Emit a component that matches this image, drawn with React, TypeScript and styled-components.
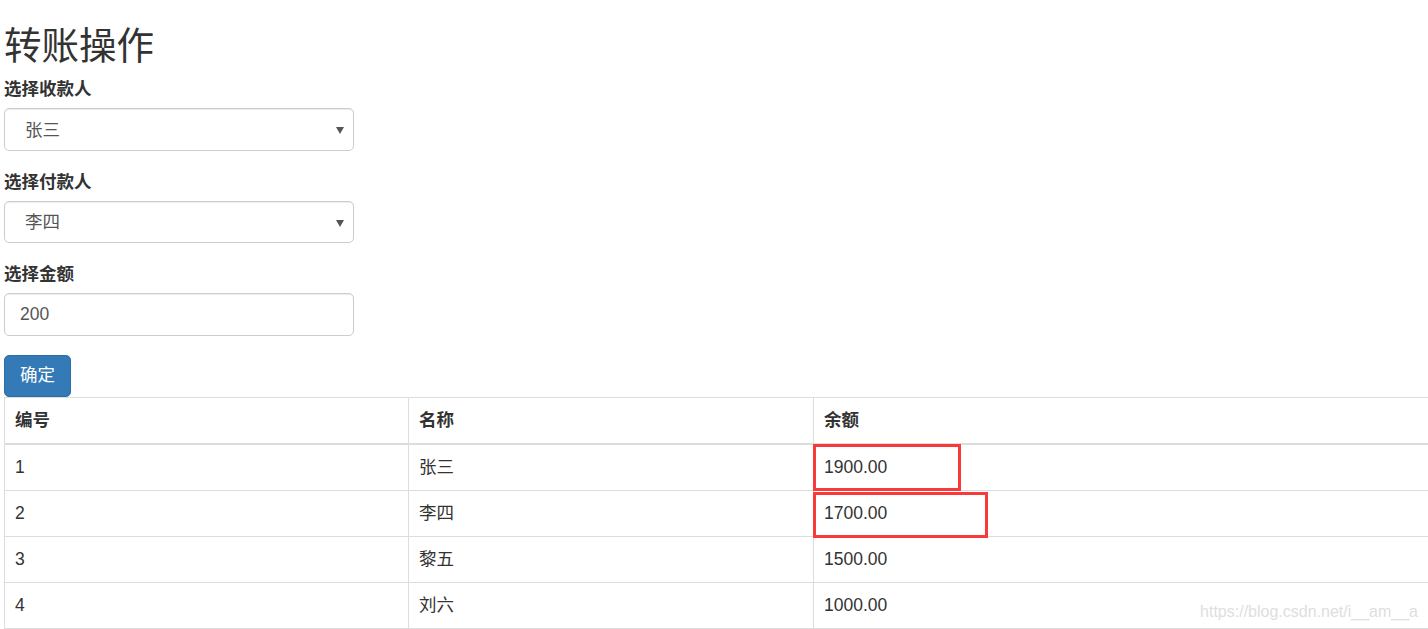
import styled, { createGlobalStyle } from "styled-components";

const GlobalStyle = createGlobalStyle`
  html, body {
    margin: 0;
    padding: 0;
    overflow: hidden;
    background: #fff;
  }
  body {
    font-family: "Liberation Sans", "Noto Sans CJK SC", sans-serif;
    font-size: 17.5px;
    line-height: 25px;
    color: #333;
  }
`;

interface Account {
  id: number;
  name: string;
  balance: string;
}

const accounts: Account[] = [
  { id: 1, name: "张三", balance: "1900.00" },
  { id: 2, name: "李四", balance: "1700.00" },
  { id: 3, name: "黎五", balance: "1500.00" },
  { id: 4, name: "刘六", balance: "1000.00" },
];

const App = () => {
  return (
    <Page>
      <GlobalStyle />
      <Title>转账操作</Title>
      <FormGroup>
        <Label>选择收款人</Label>
        <SelectBox>
          <Select defaultValue="张三">
            {accounts.map((a) => (
              <option key={a.id}>{a.name}</option>
            ))}
          </Select>
          <Caret width="8" height="8" viewBox="0 0 8 8">
            <path d="M0 1 L8 1 L4 8 Z" fill="#555" />
          </Caret>
        </SelectBox>
      </FormGroup>
      <FormGroup>
        <Label>选择付款人</Label>
        <SelectBox>
          <Select defaultValue="李四">
            {accounts.map((a) => (
              <option key={a.id}>{a.name}</option>
            ))}
          </Select>
          <Caret width="8" height="8" viewBox="0 0 8 8">
            <path d="M0 1 L8 1 L4 8 Z" fill="#555" />
          </Caret>
        </SelectBox>
      </FormGroup>
      <FormGroup>
        <Label>选择金额</Label>
        <Input defaultValue="200" />
      </FormGroup>
      <Button>确定</Button>
      <TableWrap>
        <Table>
          <colgroup>
            <col style={{ width: 404 }} />
            <col style={{ width: 405 }} />
            <col />
          </colgroup>
          <thead>
            <tr>
              <Th>编号</Th>
              <Th>名称</Th>
              <Th>余额</Th>
            </tr>
          </thead>
          <tbody>
            {accounts.map((a) => (
              <tr key={a.id}>
                <Td>{a.id}</Td>
                <Td>{a.name}</Td>
                <Td>{a.balance}</Td>
              </tr>
            ))}
          </tbody>
        </Table>
        <Mark $top={47} $width={148} $height={47} />
        <Mark $top={95} $width={175} $height={46} />
      </TableWrap>
      <Watermark>https://blog.csdn.net/i__am__a</Watermark>
    </Page>
  );
};

const Page = styled.div`
  position: relative;
  padding-left: 4px;
  height: 629px;
  box-sizing: border-box;
`;

const Title = styled.h2`
  margin: 0;
  padding-top: 26px;
  margin-bottom: 10px;
  font-size: 37.5px;
  line-height: 41px;
  font-weight: 400;
  color: #333;
`;

const FormGroup = styled.div`
  width: 350px;
  margin-bottom: 19px;
`;

const Label = styled.div`
  font-weight: 700;
  margin-bottom: 6px;
`;

const SelectBox = styled.div`
  display: flex;
  align-items: center;
  height: 42.5px;
  box-sizing: border-box;
  border: 1px solid #ccc;
  border-radius: 5px;
  padding: 2px 9px 0 16px;
  box-shadow: inset 0 1px 1px rgba(0, 0, 0, 0.075);
`;

const Select = styled.select`
  flex: 1;
  appearance: none;
  border: none;
  outline: none;
  background: transparent;
  font: inherit;
  line-height: 25px;
  color: #555;
  padding: 0 0 0 4px;
`;

const Caret = styled.svg`
  display: block;
`;

const Input = styled.input`
  display: block;
  width: 350px;
  height: 42.5px;
  box-sizing: border-box;
  border: 1px solid #ccc;
  border-radius: 5px;
  padding: 0 15px 0 15px;
  font: inherit;
  color: #555;
  outline: none;
  box-shadow: inset 0 1px 1px rgba(0, 0, 0, 0.075);
`;

const Button = styled.button`
  display: block;
  height: 42.5px;
  padding: 0 15px;
  border: 1px solid #2e6da4;
  border-radius: 5px;
  background: #337ab7;
  color: #fff;
  font: inherit;
`;

const TableWrap = styled.div`
  position: relative;
  width: 1440px;
`;

const Table = styled.table`
  width: 100%;
  table-layout: fixed;
  border-collapse: collapse;
  border: 1px solid #ddd;
`;

const Th = styled.th`
  text-align: left;
  font-weight: 700;
  padding: 10px;
  line-height: 25px;
  border: 1px solid #ddd;
  border-bottom: 2px solid #ddd;
`;

const Td = styled.td`
  padding: 10px;
  line-height: 25px;
  border: 1px solid #ddd;
`;

const Mark = styled.div<{ $top: number; $width: number; $height: number }>`
  position: absolute;
  left: 809px;
  top: ${(p) => p.$top}px;
  width: ${(p) => p.$width}px;
  height: ${(p) => p.$height}px;
  box-sizing: border-box;
  border: 3px solid #f83a3a;
`;

const Watermark = styled.div`
  position: absolute;
  right: 10px;
  bottom: 8px;
  font-size: 16px;
  line-height: 18px;
  color: #dedede;
  font-family: "Liberation Sans", sans-serif;
`;

export default App;
